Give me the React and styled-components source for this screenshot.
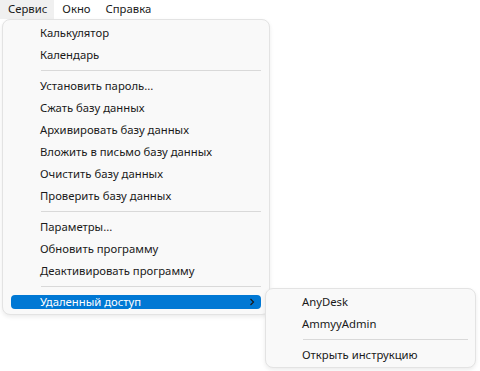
import React from "react";
import styled, { createGlobalStyle } from "styled-components";

const GlobalStyle = createGlobalStyle`
  html, body {
    margin: 0;
    padding: 0;
    background: #ffffff;
  }
  body {
    font-family: "Noto Sans", "Open Sans", sans-serif;
    font-size: 11.3px;
    color: #1a1a1a;
  }
`;

const Page = styled.div`
  min-height: 371px;
`;

const MenuBar = styled.div`
  display: flex;
  height: 19px;
  align-items: stretch;
`;

const BarItem = styled.div`
  display: flex;
  align-items: center;
  padding: 0 7px 1px 8px;
  background: ${(p) => (p.$open ? "#f0f0f0" : "transparent")};
  line-height: 1;
`;

const Panel = styled.div`
  position: relative;
  box-sizing: border-box;
  width: ${(p) => p.$width}px;
  margin-left: 2px;
  padding: 2px 0 1px;
  background: #f9f9f9;
  border: 1px solid #e3e3e3;
  border-radius: 8px;
  box-shadow: 0 2px 4px rgba(0, 0, 0, 0.08);
`;

const Row = styled.div`
  position: relative;
  height: 22px;
  display: flex;
  align-items: center;
`;

const Label = styled.div`
  flex: 1;
  display: flex;
  align-items: center;
  height: 14px;
  margin: 0 8px;
  padding-left: ${(p) => p.$indent}px;
  padding-right: 6px;
  border-radius: 4px;
  background: ${(p) => (p.$active ? "#0078d4" : "transparent")};
  color: ${(p) => (p.$active ? "#ffffff" : "#1a1a1a")};
  white-space: nowrap;
`;

const Text = styled.span`
  flex: 1;
  line-height: 14px;
`;

const Separator = styled.div`
  height: 9px;
  display: flex;
  align-items: center;
  padding: 0 ${(p) => p.$right}px 0 ${(p) => p.$left}px;
  &::after {
    content: "";
    flex: 1;
    height: 1px;
    background: #d9d9d9;
  }
`;

const Sub = styled.div`
  position: absolute;
  z-index: 2;
  left: 260px;
  top: -3px;
`;

const Chevron = () => (
  <svg width="6" height="8" viewBox="0 0 6 8">
    <path d="M1.5 1 L4.5 4 L1.5 7" fill="none" stroke="#1a1a1a" strokeWidth="1.2" />
  </svg>
);

const mainGroups = [
  ["Калькулятор", "Календарь"],
  [
    "Установить пароль...",
    "Сжать базу данных",
    "Архивировать базу данных",
    "Вложить в письмо базу данных",
    "Очистить базу данных",
    "Проверить базу данных",
  ],
  ["Параметры...", "Обновить программу", "Деактивировать программу"],
];

const SubMenu = () => (
  <Sub>
    <Panel $width={211}>
      <Row>
        <Label $indent={28}><Text>AnyDesk</Text></Label>
      </Row>
      <Row>
        <Label $indent={28}><Text>AmmyyAdmin</Text></Label>
      </Row>
      <Separator $left={37} $right={7} />
      <Row>
        <Label $indent={28}><Text>Открыть инструкцию</Text></Label>
      </Row>
    </Panel>
  </Sub>
);

export default function App() {
  return (
    <Page>
      <GlobalStyle />
      <MenuBar>
        <BarItem $open>Сервис</BarItem>
        <BarItem>Окно</BarItem>
        <BarItem>Справка</BarItem>
      </MenuBar>
      <Panel $width={268}>
        {mainGroups.map((group, gi) => (
          <React.Fragment key={gi}>
            {group.map((t) => (
              <Row key={t}>
                <Label $indent={29}><Text>{t}</Text></Label>
              </Row>
            ))}
            <Separator $left={38} $right={8} />
          </React.Fragment>
        ))}
        <Row>
          <Label $indent={29} $active>
            <Text>Удаленный доступ</Text>
            <Chevron />
          </Label>
          <SubMenu />
        </Row>
      </Panel>
    </Page>
  );
}
